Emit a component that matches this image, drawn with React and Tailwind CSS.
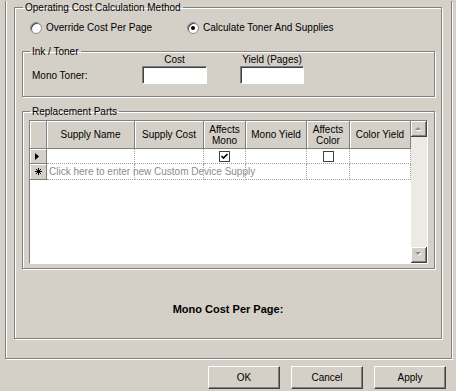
import React from "react";

const hdr =
  "flex items-center justify-center text-center leading-[11px] bg-[#d4d0c8] border-r border-b border-[#808080] shadow-[inset_1px_1px_0_#fff]";
const cell = "h-full border-r border-b border-dotted border-[#a0a0a0]";

const columns = [
  { w: "w-[88px]", label: "Supply Name" },
  { w: "w-[69px]", label: "Supply Cost" },
  { w: "w-[42px]", label: "Affects Mono", two: true },
  { w: "w-[61px]", label: "Mono Yield" },
  { w: "w-[43px]", label: "Affects Color", two: true },
  { w: "w-[61px]", label: "Color Yield" },
];

function Radio({ checked, label }) {
  return (
    <label className="flex items-center gap-[4px]">
      <span className="w-[12px] h-[12px] rounded-full bg-white border border-[#8a8a8a] shadow-[inset_1px_1px_0_#404040] flex items-center justify-center">
        {checked && <span className="w-[4px] h-[4px] rounded-full bg-black" />}
      </span>
      <span>{label}</span>
    </label>
  );
}

function Checkbox({ checked }) {
  return (
    <span className="w-[11px] h-[11px] bg-white border border-[#404040] flex items-center justify-center">
      {checked && (
        <svg width="9" height="9" viewBox="0 0 9 9">
          <path d="M1.5 4 L3.5 6 L7.5 2" stroke="#000" strokeWidth="1.6" fill="none" />
        </svg>
      )}
    </span>
  );
}

function TextBox({ w }) {
  return (
    <div
      className={`${w} h-[18px] bg-white border border-t-[#808080] border-l-[#808080] border-b-white border-r-white shadow-[inset_1px_1px_0_#404040]`}
    />
  );
}

function ScrollBtn({ up }) {
  return (
    <div className="w-[16px] h-[16px] bg-[#d4d0c8] border-r border-b border-[#404040] shadow-[inset_1px_1px_0_#fff,inset_-1px_-1px_0_#808080] flex items-center justify-center">
      <svg width="8" height="5" viewBox="0 0 8 5">
        {up ? (
          <>
            <polygon points="1,5 7,5 4,2" fill="#fff" />
            <polygon points="0,4 6,4 3,1" fill="#8c8c8c" />
          </>
        ) : (
          <>
            <polygon points="1,1 7,1 4,4" fill="#fff" />
            <polygon points="0,0 6,0 3,3" fill="#8c8c8c" />
          </>
        )}
      </svg>
    </div>
  );
}

export default function App() {
  return (
    <div className="w-[456px] h-[391px] bg-[#d4d0c8] overflow-hidden text-[10px] text-black font-['Liberation_Sans',Arial,sans-serif]">
      {/* tab page */}
      <div className="ml-[5px] w-[447px] h-[358px] border-l border-r border-b border-[#808080] shadow-[inset_1px_0_0_#fff,1px_1px_0_#fff]">
        <fieldset className="ml-[8px] mt-[1px] w-[428px] h-[338px] border border-[#808080] shadow-[inset_1px_1px_0_#fff,1px_1px_0_#fff]">
          <legend className="ml-[8px] px-[2px] leading-[13px]">Operating Cost Calculation Method</legend>

          <div className="flex mt-[7px] pl-[15px] leading-[13px]">
            <div className="w-[157px]">
              <Radio label="Override Cost Per Page" />
            </div>
            <Radio checked label="Calculate Toner And Supplies" />
          </div>

          {/* Ink / Toner */}
          <fieldset className="ml-[7px] mt-[11px] w-[413px] h-[52px] border border-[#808080] shadow-[inset_1px_1px_0_#fff,1px_1px_0_#fff]">
            <legend className="ml-[7px] px-[2px] leading-[13px]">Ink / Toner</legend>
            <div className="flex mt-[-5px] pl-[9px] leading-[13px]">
              <div className="w-[110px]" />
              <div className="w-[65px] text-center">Cost</div>
              <div className="w-[64px] ml-[33px] text-center">Yield (Pages)</div>
            </div>
            <div className="flex items-center pl-[9px]">
              <div className="w-[110px]">Mono Toner:</div>
              <TextBox w="w-[65px]" />
              <div className="ml-[33px]">
                <TextBox w="w-[64px]" />
              </div>
            </div>
          </fieldset>

          {/* Replacement Parts */}
          <fieldset className="ml-[7px] mt-[8px] w-[413px] h-[164px] border border-[#808080] shadow-[inset_1px_1px_0_#fff,1px_1px_0_#fff]">
            <legend className="ml-[7px] px-[2px] leading-[13px]">Replacement Parts</legend>
            <div className="ml-[6px] mt-[2px] w-[399px] h-[144px] flex border border-t-[#808080] border-l-[#808080] border-b-white border-r-white">
              <div className="w-[381px] bg-white flex flex-col">
                <div className="flex h-[28px] shrink-0">
                  <div className={`w-[17px] ${hdr}`} />
                  {columns.map((c) => (
                    <div key={c.label} className={`${c.w} ${hdr}`}>
                      {c.two ? (
                        <span>
                          {c.label.split(" ")[0]}
                          <br />
                          {c.label.split(" ")[1]}
                        </span>
                      ) : (
                        c.label
                      )}
                    </div>
                  ))}
                </div>

                <div className="flex h-[15px] shrink-0">
                  <div className={`w-[17px] ${hdr} justify-start pl-[5px]`}>
                    <svg width="4" height="7" viewBox="0 0 4 7">
                      <polygon points="0,0 4,3.5 0,7" fill="#000" />
                    </svg>
                  </div>
                  {columns.map((c, i) => (
                    <div key={c.label} className={`${c.w} ${cell} flex items-center justify-center`}>
                      {i === 2 && <Checkbox checked />}
                      {i === 4 && <Checkbox />}
                    </div>
                  ))}
                </div>

                <div className="flex h-[16px] shrink-0">
                  <div className={`w-[17px] ${hdr}`}>
                    <svg width="7" height="7" viewBox="0 0 7 7">
                      <path d="M3.5 0 V7 M0 3.5 H7 M1 1 L6 6 M6 1 L1 6" stroke="#000" strokeWidth="1" />
                    </svg>
                  </div>
                  {columns.map((c, i) => (
                    <div key={c.label} className={`${c.w} ${cell} flex items-center`}>
                      {i === 0 && (
                        <span className="pl-[2px] whitespace-nowrap text-[#8c8c8c]">
                          Click here to enter new Custom Device Supply
                        </span>
                      )}
                    </div>
                  ))}
                </div>
              </div>

              <div className="w-[16px] flex flex-col bg-[#eceae4]">
                <ScrollBtn up />
                <div className="flex-1" />
                <ScrollBtn />
              </div>
            </div>
          </fieldset>

          <div className="mt-[34px] text-center text-[11px] font-bold leading-[13px]">Mono Cost Per Page:</div>
        </fieldset>
      </div>

      <div className="flex justify-end gap-[11px] pr-[10px] mt-[7px]">
        {["OK", "Cancel", "Apply"].map((b) => (
          <button
            key={b}
            className="w-[72px] h-[23px] bg-[#d4d0c8] border-t border-l border-t-white border-l-white border-b border-r border-b-[#404040] border-r-[#404040] shadow-[inset_-1px_-1px_0_#808080]"
          >
            {b}
          </button>
        ))}
      </div>
    </div>
  );
}
